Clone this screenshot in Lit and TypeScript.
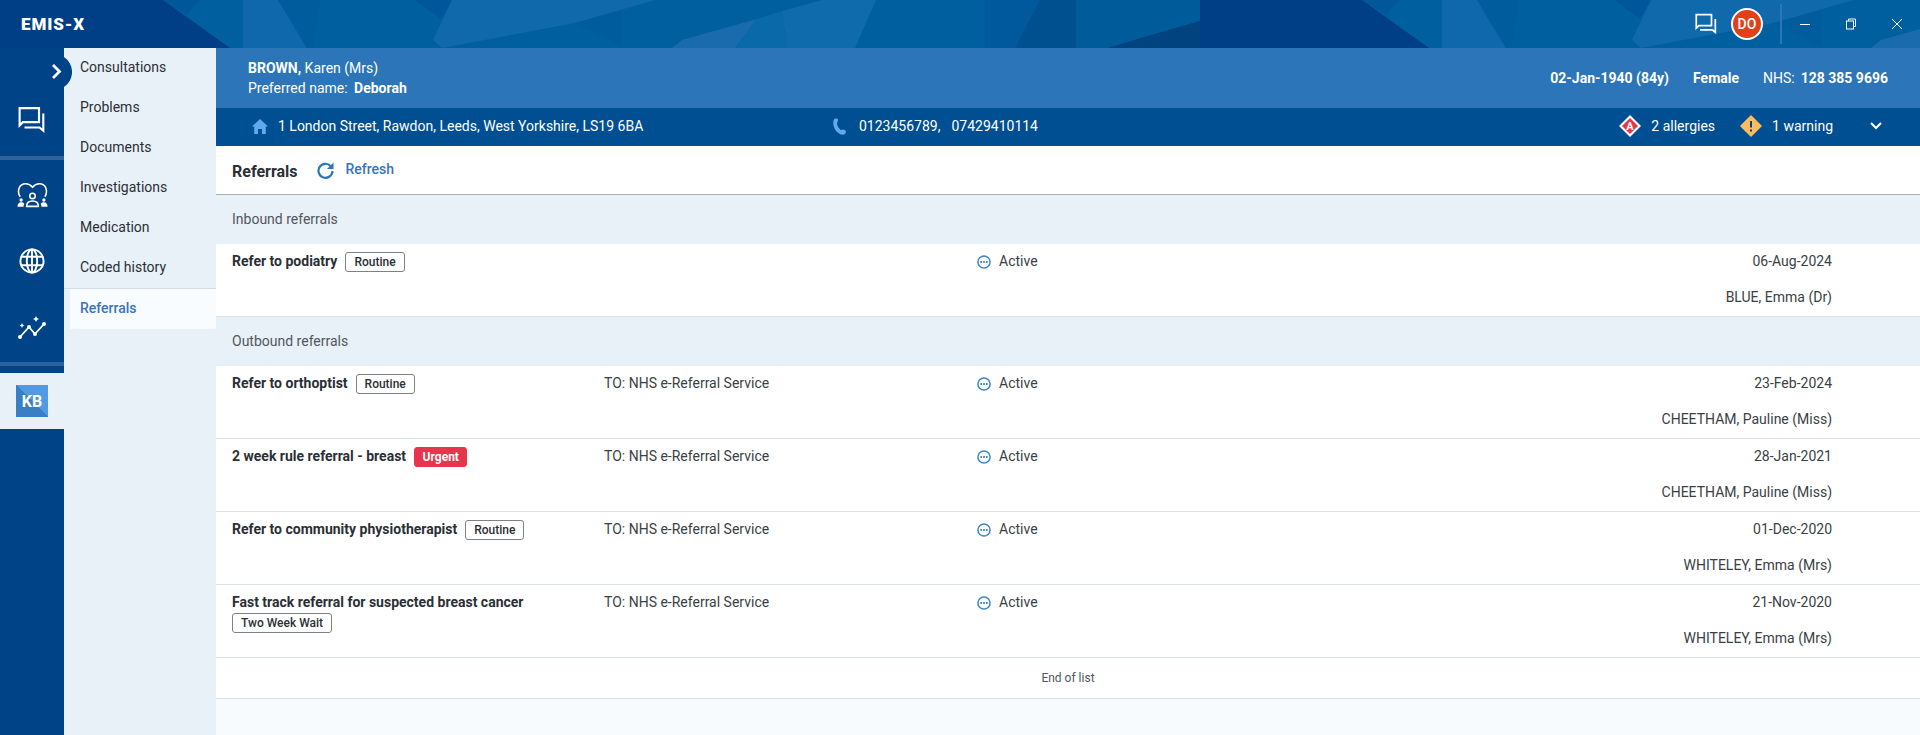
import { LitElement, html, css, svg } from "lit";
import { customElement } from "lit/decorators.js";

const polys: [string, string][] = [
  ["#00609f", "163,0 1200,0 1200,21 1108,48 230,48"],
  ["#00589a", "163,0 200,0 187,15"],
  ["#0f68ab", "243,0 278,0 307,48 243,48"],
  ["#005c9d", "278,0 320,0 313,48 307,48"],
  ["#00569a", "415,0 452,0 441,19"],
  ["#0f69ab", "452,0 655,0 575,23 442,48 433,40"],
  ["#005c9c", "575,23 622,10 622,46"],
  ["#1a6bad", "672,48 682,40 757,19 735,48"],
  ["#0a69a9", "757,19 782,11 787,48 735,48"],
  ["#0f6bab", "782,11 822,0 876,0 855,48 787,48"],
  ["#00599c", "985,0 1040,0 1015,48 985,48"],
  ["#00508f", "1040,0 1076,0 1076,48 1015,48"],
  ["#005b9b", "1076,0 1200,0 1200,21 1144,37 1108,48 1076,48"],
  ["#00437f", "1144,37 1200,21 1200,48 1108,48"],
];

const chat = (s: number) => html`<svg width=${s} height=${s} viewBox="0 0 26 26" fill="none" stroke="#fff" stroke-width="2">
  <path d="M1.5 2h18v13h-15l-3 3z" stroke-linejoin="miter"></path>
  <path d="M24 7v16l-3.500-3H6" fill="none"></path>
</svg>`;

const activeIcon = html`<svg class="st" width="14" height="14" viewBox="0 0 14 14">
  <circle cx="7" cy="7" r="6.100" fill="none" stroke="#3f86c4" stroke-width="1.500"></circle>
  <circle cx="4.200" cy="7" r="1" fill="#2b75b8"></circle><circle cx="7" cy="7" r="1" fill="#2b75b8"></circle><circle cx="9.800" cy="7" r="1" fill="#2b75b8"></circle>
</svg>`;

interface R { t: string; b: string; c: string; to?: string; d: string; w: string }
const inbound: R[] = [{ t: "Refer to podiatry", b: "Routine", c: "", d: "06-Aug-2024", w: "BLUE, Emma (Dr)" }];
const TO = "TO: NHS e-Referral Service";
const outbound: R[] = [
  { t: "Refer to orthoptist", b: "Routine", c: "", to: TO, d: "23-Feb-2024", w: "CHEETHAM, Pauline (Miss)" },
  { t: "2 week rule referral - breast", b: "Urgent", c: "urg", to: TO, d: "28-Jan-2021", w: "CHEETHAM, Pauline (Miss)" },
  { t: "Refer to community physiotherapist", b: "Routine", c: "", to: TO, d: "01-Dec-2020", w: "WHITELEY, Emma (Mrs)" },
  { t: "Fast track referral for suspected breast cancer", b: "Two Week Wait", c: "", to: TO, d: "21-Nov-2020", w: "WHITELEY, Emma (Mrs)" },
];

@customElement("app-root")
export class AppRoot extends LitElement {
  static styles = css`
    :host { display: block; width: 1920px; height: 735px; overflow: hidden; font-family: Roboto, "Liberation Sans", sans-serif; font-size: 14px; color: #2b2f36; background: #f8fbfe; }
    .top { position: relative; height: 48px; display: flex; align-items: center; overflow: hidden; }
    .bg { position: absolute; inset: 0; }
    .logo { position: relative; margin-left: 21px; font-size: 17px; font-weight: 900; color: #fff; letter-spacing: .9px; flex: 1; }
    .tr { position: relative; display: flex; align-items: center; height: 48px; }
    .tr .chatb { display: flex; margin-right: 14px; }
    .avatar { width: 32px; height: 32px; box-sizing: border-box; border-radius: 50%; border: 2px solid #fff; background: #e2401a; color: #fff; font-size: 14px; font-weight: 500; display: flex; align-items: center; justify-content: center; }
    .vsep { width: 2px; height: 40px; background: #2b75b8; margin: 0 0 0 17px; }
    .win { display: flex; width: 46px; justify-content: center; }
    .body { display: flex; height: 687px; }
    .rail { width: 64px; background: #004386; display: flex; flex-direction: column; align-items: center; position: relative; }
    .cell { width: 64px; display: flex; justify-content: center; align-items: center; box-sizing: border-box; }
    .c1 { height: 108px; padding-top: 36px; }
    .c2 { height: 70px; }
    .c3 { height: 62px; }
    .c4 { height: 70px; }
    .rsep { width: 64px; height: 4px; background: #2f6298; }
    .kb { height: 56px; background: #e9f1f8; margin-top: 7px; }
    .kbt { width: 32px; height: 32px; background: linear-gradient(45deg, #3a7fc4 50%, #5199e0 50%); color: #fff; font-weight: 700; font-size: 16px; display: flex; align-items: center; justify-content: center; }
    .side { width: 152px; background: #e9f1f8; position: relative; }
    .side a { display: flex; align-items: center; padding: 0 0 2px 16px; height: 40px; box-sizing: border-box; color: #2b2f36; font-size: 14px; }
    .side a.sel { margin-left: 6px; padding-left: 10px; background: #f8fcff; color: #3775bb; font-weight: 500; }
    .side hr { border: 0; height: 1px; margin: 0; background: #d3dde6; }
    .notch { position: absolute; left: -22px; top: 9px; width: 30px; height: 30px; }
    .main { flex: 1; display: flex; flex-direction: column; min-width: 0; }
    .pt { height: 60px; background: #2b75b8; color: #fff; box-sizing: border-box; padding: 0 32px 0 32px; display: flex; align-items: center; justify-content: space-between; line-height: 20px; }
    .pt b { font-weight: 700; }
    .ptr { display: flex; gap: 24px; }
    .nhs span { margin-right: 6px; }
    .pref b { margin-left: 3px; }
    .addr { height: 38px; background: #004f92; color: #fff; display: flex; align-items: center; padding: 0 0 2px 36px; box-sizing: border-box; position: relative; }
    .addr .i { display: flex; margin-right: 10px; }
    .a1 { width: 580px; display: flex; align-items: center; }
    .a2 { flex: 1; display: flex; align-items: center; }
    .a2 .i { margin-right: 8px; }
    .ph2 { margin-left: 11px; }
    .al { display: flex; align-items: center; }
    .al svg { display: block; }
    .alr { margin-right: 10px; }
    .gap { width: 25px; }
    .chev { display: flex; margin: 0 38px 0 37px; }
    .bar { height: 48px; background: #fff; border-bottom: 1px solid #a8b0b3; display: flex; align-items: center; padding-left: 16px; }
    .bar .h { font-weight: 700; font-size: 16px; color: #2b2f36; margin-right: 19px; position: relative; top: 1px; }
    .bar .rf { display: flex; align-items: center; gap: 12px; color: #3775bb; font-weight: 500; font-size: 14px; }
    .bar .rf span { position: relative; top: -1px; }
    .sec { height: 49px; background: #e9f1f8; display: flex; align-items: center; padding: 0 0 2px 16px; color: #51565c; font-size: 14px; box-sizing: border-box; }
    .row { height: 73px; box-sizing: border-box; background: #fff; border-bottom: 1px solid #d9e2e9; display: grid; grid-template-columns: 372px 373px 1fr auto; padding: 8px 88px 0 16px; }
    .nm { display: flex; flex-wrap: wrap; align-items: flex-start; align-content: flex-start; column-gap: 8px; row-gap: 2px; }
    .nm b { font-weight: 700; font-size: 14px; line-height: 18px; color: #2b2f36; }
    .bd { height: 20px; box-sizing: border-box; border: 1px solid #7d8287; border-radius: 3px; padding: 0 8px; font-size: 12px; font-weight: 500; line-height: 18px; color: #2b2f36; background: #fff; white-space: nowrap; }
    .bd.urg { background: #e8354d; border-color: #e8354d; color: #fff; font-weight: 700; padding: 0 7.5px; }
    .to, .stc, .rt { line-height: 18px; color: #3a3f45; }
    .stc { display: flex; align-items: center; height: 18px; }
    .stc svg { margin: 2px 8px 0 0; }
    .rt { text-align: right; }
    .rt div + div { margin-top: 18px; }
    .end { height: 41px; box-sizing: border-box; background: #fff; border-bottom: 1px solid #d9e2e9; display: flex; align-items: center; justify-content: center; font-size: 12px; color: #51565c; }
  `;

  row(r: R) {
    return html`<div class="row">
      <div class="nm"><b>${r.t}</b><span class="bd ${r.c}">${r.b}</span></div>
      <div class="to">${r.to ?? ""}</div>
      <div class="stc">${activeIcon}Active</div>
      <div class="rt"><div>${r.d}</div><div>${r.w}</div></div>
    </div>`;
  }

  render() {
    const layer = polys.map(([f, p]) => svg`<polygon fill=${f} points=${p}></polygon>`);
    return html`
      <div class="top">
        <svg class="bg" width="1920" height="48" viewBox="0 0 1920 48">
          <rect width="1920" height="48" fill="#003f85"></rect>
          <g>${layer}</g>
          <g transform="translate(1199 0)">${polys.map(([f, p]) => svg`<polygon fill=${f} points=${p}></polygon>`)}</g>
        </svg>
        <div class="logo">EMIS-X</div>
        <div class="tr">
          <span class="chatb">${chat(22)}</span>
          <div class="avatar">DO</div>
          <div class="vsep"></div>
          <span class="win"><svg width="12" height="12" viewBox="0 0 12 12"><path d="M1 6.500h10" stroke="#fff"></path></svg></span>
          <span class="win"><svg width="12" height="12" viewBox="0 0 12 12" fill="none" stroke="#fff"><rect x="1.500" y="3" width="7" height="8"></rect><path d="M3.500 3V1h7v7.500H8.500"></path></svg></span>
          <span class="win"><svg width="12" height="12" viewBox="0 0 12 12" fill="none" stroke="#fff"><path d="M1 1l10 10M11 1L1 11"></path></svg></span>
        </div>
      </div>
      <div class="body">
        <nav class="rail">
          <div class="cell c1">
            <svg width="28" height="28" viewBox="0 0 26 26" fill="none" stroke="#fff" stroke-width="2">
              <path d="M1.500 2h18v13h-15l-3 3z"></path><path d="M23.500 7v16l-3.500-3H6"></path>
            </svg>
          </div>
          <div class="rsep"></div>
          <div class="cell c2">
            <svg width="31" height="26" viewBox="0 0 34 28" fill="none" stroke="#fff" stroke-width="1.700">
              <path d="M3.500 16C.5 12 1 4 7 2c4-1 7 0 10 3.500C20 2 23 1 27 2c6 2 6.500 10 3.500 14"></path>
              <circle cx="17" cy="15" r="3"></circle>
              <path d="M10.500 26.500c0-4 2.500-6 6.500-6s6.500 2 6.500 6z"></path>
              <circle cx="4.500" cy="19.500" r="1.800" fill="#fff" stroke="none"></circle><path d="M.5 27c0-3 1.500-5 4-5 1.500 0 2.500.5 3.500 1.500l-1 3.500z" fill="#fff" stroke="none"></path>
              <circle cx="29.500" cy="19.500" r="1.800" fill="#fff" stroke="none"></circle><path d="M33.500 27c0-3-1.500-5-4-5-1.500 0-2.500.5-3.500 1.500l1 3.500z" fill="#fff" stroke="none"></path>
            </svg>
          </div>
          <div class="cell c3">
            <svg width="26" height="26" viewBox="0 0 26 26" fill="none" stroke="#fff" stroke-width="1.900">
              <circle cx="13" cy="13" r="11.600"></circle><ellipse cx="13" cy="13" rx="5.200" ry="11.600"></ellipse><path d="M13 1.400v23.200M2.300 8.800h21.400M2.300 17.200h21.400"></path>
            </svg>
          </div>
          <div class="cell c4">
            <svg width="30" height="26" viewBox="0 0 30 26" fill="none" stroke="#fff" stroke-width="1.800">
              <path d="M3 23l9-10 6 7 9-10"></path>
              <g fill="#fff" stroke="none"><circle cx="3" cy="23" r="2"></circle><circle cx="12" cy="13" r="2"></circle><circle cx="18" cy="20" r="2"></circle><circle cx="27" cy="10" r="2"></circle>
              <path d="M5 9l.8 1.700 1.700.8-1.700.8L5 14l-.8-1.700-1.700-.8 1.700-.8zM19 2l1 2 2 1-2 1-1 2-1-2-2-1 2-1z"></path></g>
            </svg>
          </div>
          <div class="rsep"></div>
          <div class="cell kb"><div class="kbt">KB</div></div>
        </nav>
        <aside class="side">
          <svg class="notch" width="30" height="30" viewBox="0 0 30 30"><path d="M22 0a18 18 0 0 1 0 30z" fill="#004386"></path><path d="M11 8l6.500 6.500L11 21" fill="none" stroke="#fff" stroke-width="2.800"></path></svg>
          <a>Consultations</a><a>Problems</a><a>Documents</a><a>Investigations</a><a>Medication</a><a>Coded history</a>
          <hr />
          <a class="sel">Referrals</a>
        </aside>
        <main class="main">
          <div class="pt">
            <div>
              <div><b>BROWN,</b> Karen (Mrs)</div>
              <div class="pref">Preferred name: <b>Deborah</b></div>
            </div>
            <div class="ptr">
              <b>02-Jan-1940 (84y)</b><b>Female</b>
              <div class="nhs"><span>NHS:</span><b>128 385 9696</b></div>
            </div>
          </div>
          <div class="addr">
            <div class="a1">
              <span class="i"><svg width="16" height="15" viewBox="0 0 16 15"><path d="M8 0l8 7.500h-2.200V15H10v-5H6v5H2.200V7.500H0z" fill="#62a8ec"></path></svg></span>
              1 London Street, Rawdon, Leeds, West Yorkshire, LS19 6BA
            </div>
            <div class="a2">
              <span class="i"><svg width="19" height="17" viewBox="0 0 19 17"><path d="M4 .5c1.500 0 2 .3 2 1.500 0 2-1.200 2.500-1 4 .3 2 2 4.500 3.500 5.700 1 .8 1.800-.6 3-.2 1.500.6 2.500 1.200 2.500 2.200 0 1.500-1.500 3-3 3-3.500 0-7-3-8.500-6.500C1 7 1 3 2 1.500 2.500.8 3 .5 4 .5z" fill="#62a8ec"></path></svg></span>
              0123456789,<span class="ph2">07429410114</span>
            </div>
            <div class="al">
              <span class="alr"><svg width="22" height="22" viewBox="0 0 22 22"><path d="M11 0l11 11-11 11L0 11z" fill="#fff"></path><path d="M11 3l8 8-8 8-8-8z" fill="#e8354d"></path><text x="11" y="15" text-anchor="middle" font-size="11" font-weight="700" fill="#fff" font-family="Roboto">A</text></svg></span>
              2 allergies
              <span class="gap"></span>
              <span class="alr"><svg width="22" height="22" viewBox="0 0 22 22"><path d="M11 1l10 10-10 10L1 11z" fill="#fdbc5d" stroke="#fdbc5d" stroke-linejoin="round" stroke-width="1.500"></path><path d="M11 6v6.500M11 14.500v2" stroke="#004386" stroke-width="2"></path></svg></span>
              1 warning
              <span class="chev"><svg width="12" height="8" viewBox="0 0 12 8"><path d="M1 1l5 5 5-5" fill="none" stroke="#fff" stroke-width="2"></path></svg></span>
            </div>
          </div>
          <div class="bar">
            <span class="h">Referrals</span>
            <span class="rf">
              <svg width="17" height="17" viewBox="0 0 17 17" fill="none"><path d="M13.800 4.200A7 7 0 1 0 15.500 9" stroke="#2b75b8" stroke-width="2.200"></path><path d="M16.500 .5v6.500H10z" fill="#2b75b8"></path></svg>
              <span>Refresh</span>
            </span>
          </div>
          <div class="sec">Inbound referrals</div>
          ${inbound.map((r) => this.row(r))}
          <div class="sec">Outbound referrals</div>
          ${outbound.map((r) => this.row(r))}
          <div class="end">End of list</div>
        </main>
      </div>
    `;
  }
}
